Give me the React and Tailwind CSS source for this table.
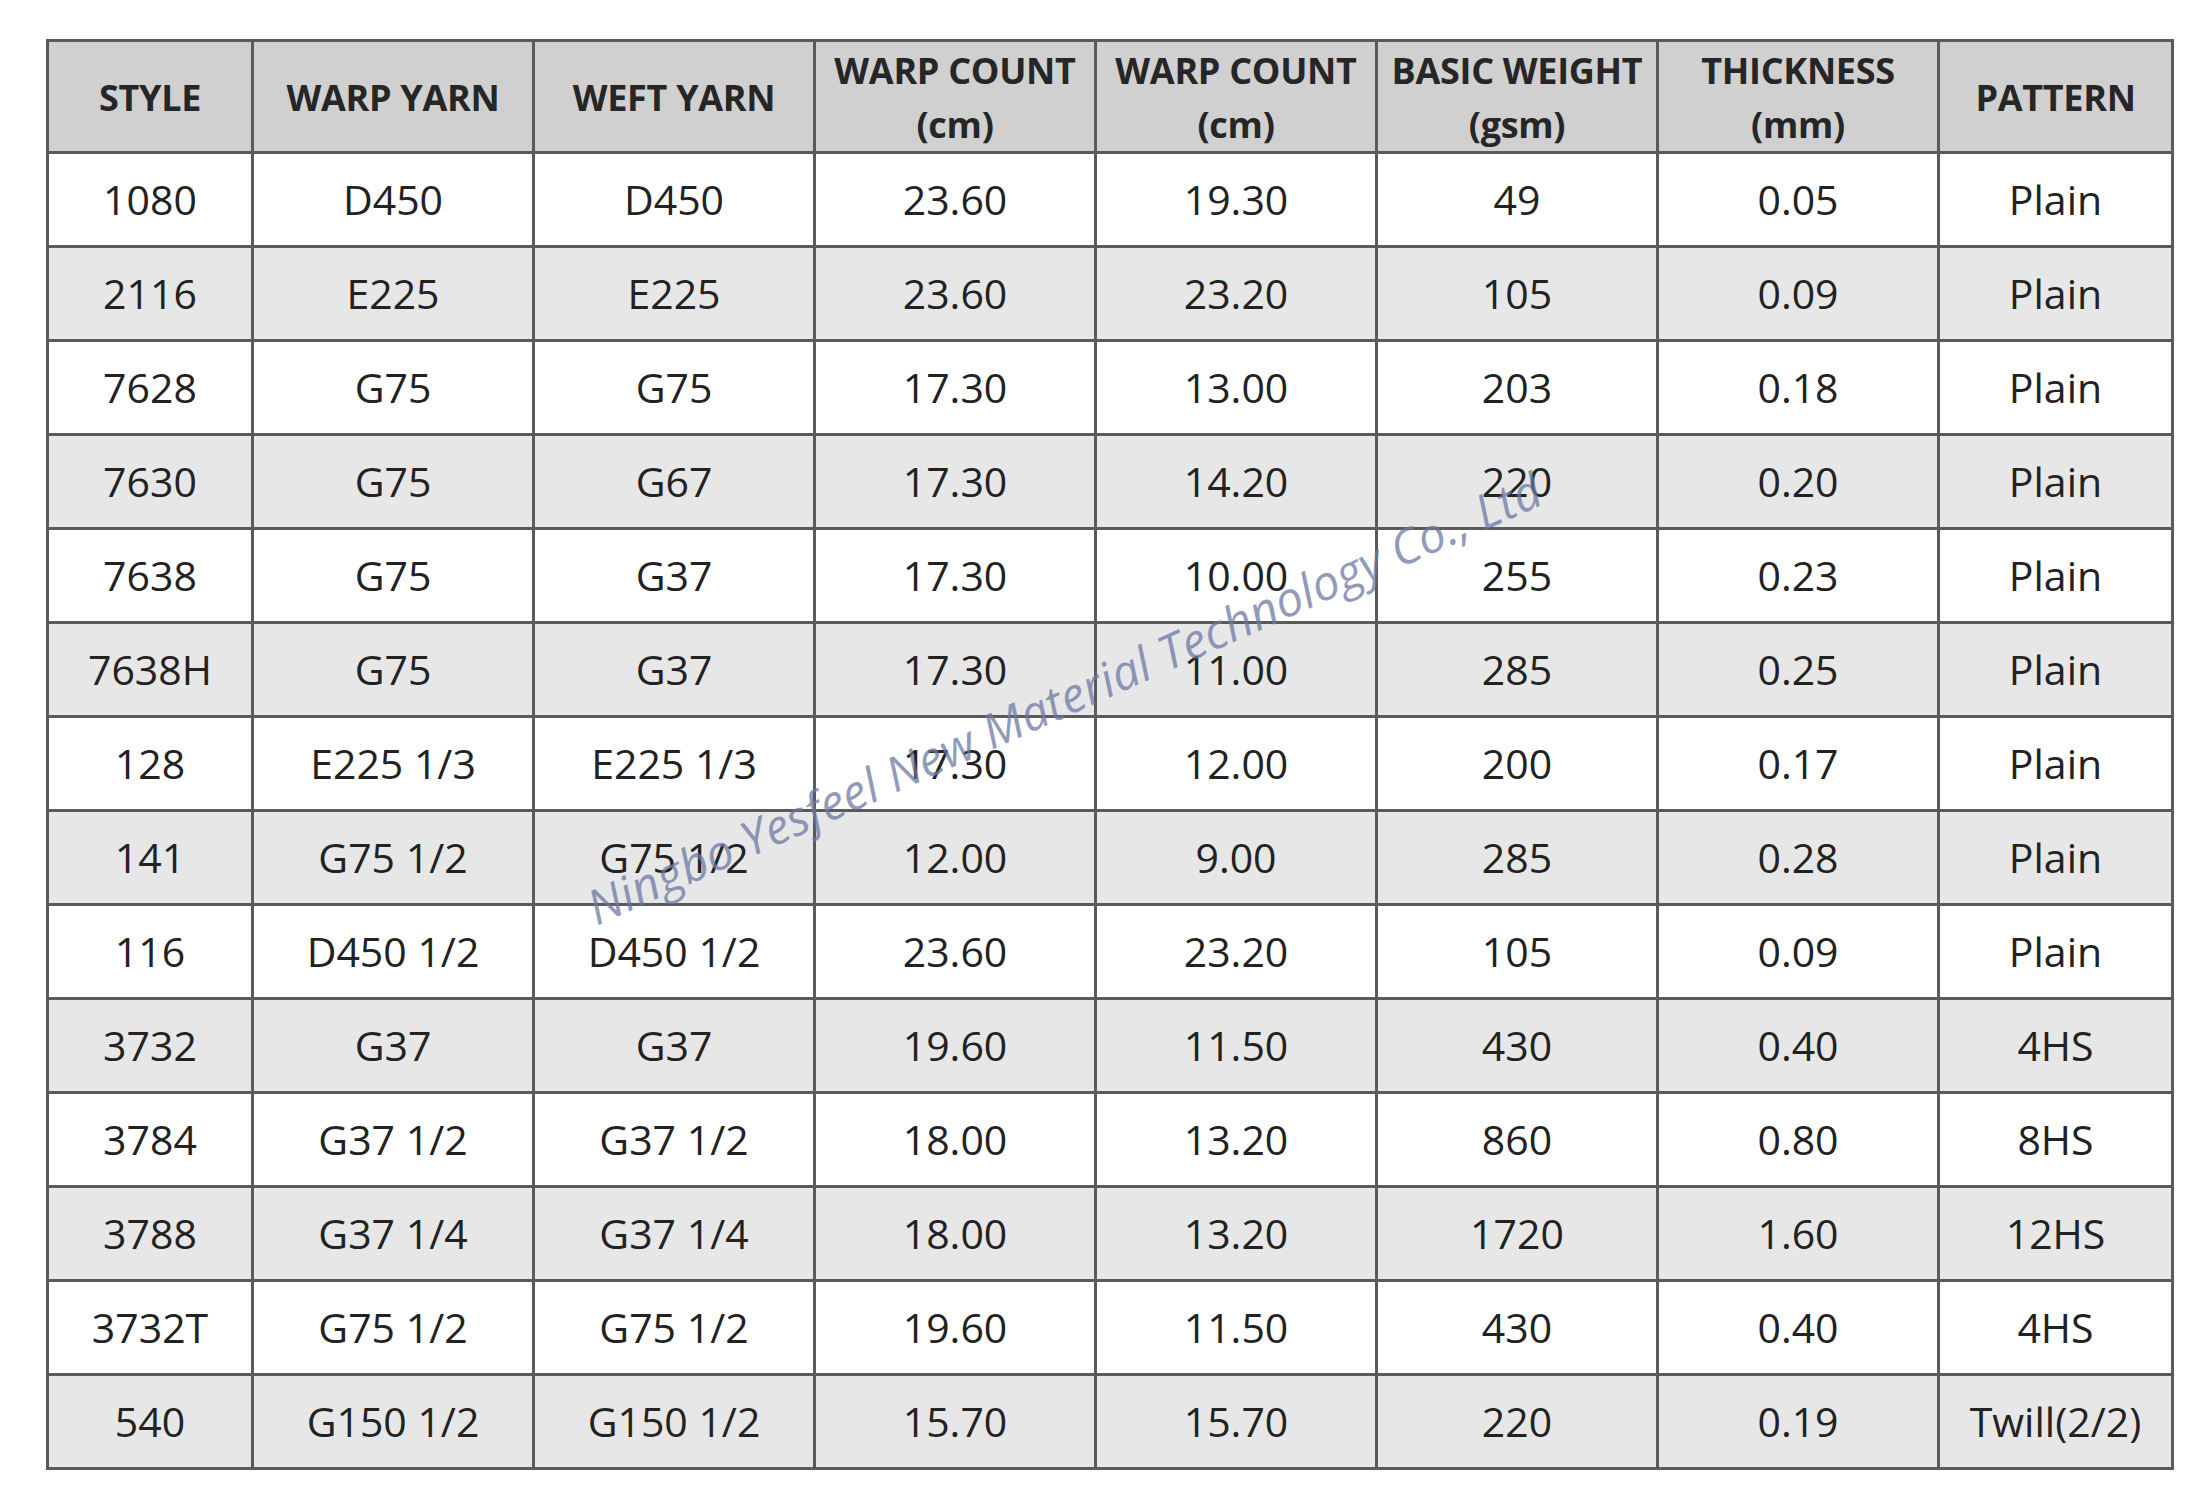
import React from "react";

const rows = [
  ["1080", "D450", "D450", "23.60", "19.30", "49", "0.05", "Plain"],
  ["2116", "E225", "E225", "23.60", "23.20", "105", "0.09", "Plain"],
  ["7628", "G75", "G75", "17.30", "13.00", "203", "0.18", "Plain"],
  ["7630", "G75", "G67", "17.30", "14.20", "220", "0.20", "Plain"],
  ["7638", "G75", "G37", "17.30", "10.00", "255", "0.23", "Plain"],
  ["7638H", "G75", "G37", "17.30", "11.00", "285", "0.25", "Plain"],
  ["128", "E225 1/3", "E225 1/3", "17.30", "12.00", "200", "0.17", "Plain"],
  ["141", "G75 1/2", "G75 1/2", "12.00", "9.00", "285", "0.28", "Plain"],
  ["116", "D450 1/2", "D450 1/2", "23.60", "23.20", "105", "0.09", "Plain"],
  ["3732", "G37", "G37", "19.60", "11.50", "430", "0.40", "4HS"],
  ["3784", "G37 1/2", "G37 1/2", "18.00", "13.20", "860", "0.80", "8HS"],
  ["3788", "G37 1/4", "G37 1/4", "18.00", "13.20", "1720", "1.60", "12HS"],
  ["3732T", "G75 1/2", "G75 1/2", "19.60", "11.50", "430", "0.40", "4HS"],
  ["540", "G150 1/2", "G150 1/2", "15.70", "15.70", "220", "0.19", "Twill(2/2)"],
];

const headers = [
  ["STYLE"],
  ["WARP YARN"],
  ["WEFT YARN"],
  ["WARP COUNT", "(cm)"],
  ["WARP COUNT", "(cm)"],
  ["BASIC WEIGHT", "(gsm)"],
  ["THICKNESS", "(mm)"],
  ["PATTERN"],
];

export default function App() {
  return (
    <div className="w-[2203px] h-[1511px] bg-white relative overflow-hidden font-['Open_Sans',sans-serif]">
      <div className="pl-[46px] pt-[39px]">
        <div className="grid w-[2128px] grid-cols-[202px_278px_278px_278px_278px_278px_278px_231px] gap-[3px] bg-[#5a5a5a] p-[3px]">
          {headers.map((h, i) => (
            <div
              key={"h" + i}
              className="h-[109px] pt-[2px] bg-[#d1d0d1] flex flex-col items-center justify-center text-[36px] font-bold text-[#262626] leading-[54px] tracking-[-0.3px]"
            >
              {h.map((t, j) => (
                <span key={j} className="whitespace-nowrap">
                  {t}
                </span>
              ))}
            </div>
          ))}
          {rows.map((r, ri) =>
            r.map((c, ci) => (
              <div
                key={ri + "-" + ci}
                className={
                  "h-[91px] flex items-center justify-center text-[41px] text-[#222222] whitespace-nowrap " +
                  (ri % 2 === 0 ? "bg-white" : "bg-[#e7e7e7]")
                }
              >
                {c}
              </div>
            ))
          )}
        </div>
      </div>
      <div className="absolute left-[1064px] top-[698px] pointer-events-none">
        <div className="-translate-x-1/2 -translate-y-1/2 -rotate-[24deg] whitespace-nowrap italic text-[48px] font-normal text-[#6b79a3]/75 tracking-[0.3px]">
          Ningbo Yesfeel New Material Technology Co., Ltd
        </div>
      </div>
    </div>
  );
}
